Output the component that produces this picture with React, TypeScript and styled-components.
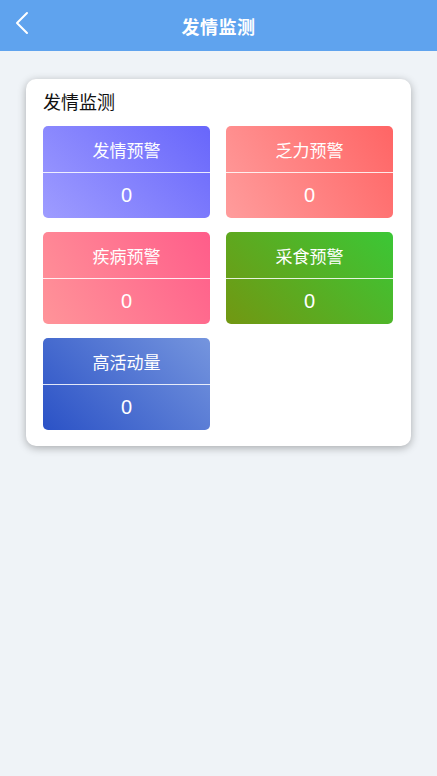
import React from "react";
import styled, { createGlobalStyle } from "styled-components";

const Global = createGlobalStyle`
  html, body {
    margin: 0;
    padding: 0;
    background: #eff3f7;
    font-family: "Liberation Sans", "Noto Sans CJK SC", sans-serif;
  }
`;

const Page = styled.div`
  min-height: 776px;
  background: #eff3f7;
`;

const Header = styled.div`
  height: 51px;
  background: #5fa3ee;
  display: flex;
  align-items: center;
  justify-content: center;
  position: relative;
  color: #fff;
`;

const Back = styled.div`
  position: absolute;
  left: 12px;
  top: 10px;
  width: 20px;
  height: 26px;
  display: flex;
  align-items: center;
  justify-content: center;
`;

const HeaderTitle = styled.div`
  font-size: 18px;
  font-weight: bold;
  letter-spacing: 0.5px;
`;

const Body = styled.div`
  padding: 28px 26px 0 26px;
`;

const Card = styled.div`
  background: #fff;
  border-radius: 10px;
  box-shadow: 0 2px 8px rgba(0, 0, 0, 0.3);
  padding: 12px 17px 16px 17px;
`;

const CardTitle = styled.div`
  font-size: 18px;
  color: #111;
  line-height: 24px;
  margin-bottom: 11px;
`;

const Grid = styled.div`
  display: grid;
  grid-template-columns: 167px 167px;
  column-gap: 16px;
  row-gap: 14px;
`;

const Tile = styled.div<{ $bg: string }>`
  height: 92px;
  border-radius: 5px;
  background: ${(p) => p.$bg};
  color: #fff;
  display: flex;
  flex-direction: column;
  overflow: hidden;
`;

const TileLabel = styled.div`
  height: 46px;
  display: flex;
  align-items: center;
  justify-content: center;
  font-size: 17px;
  border-bottom: 1px solid rgba(255, 255, 255, 0.85);
`;

const TileValue = styled.div`
  flex: 1;
  display: flex;
  align-items: center;
  justify-content: center;
  font-size: 20px;
`;

const tiles = [
  { label: "发情预警", value: 0, bg: "linear-gradient(45deg, #9e9cff, #6866fb)" },
  { label: "乏力预警", value: 0, bg: "linear-gradient(60deg, #ff9c9c, #ff6565)" },
  { label: "疾病预警", value: 0, bg: "linear-gradient(60deg, #ff9499, #ff5d8a)" },
  { label: "采食预警", value: 0, bg: "linear-gradient(45deg, #729712, #3bc736)" },
  { label: "高活动量", value: 0, bg: "linear-gradient(45deg, #2b52c6, #7595de)" },
];

export default function App() {
  return (
    <Page>
      <Global />
      <Header>
        <Back>
          <svg width="14" height="24" viewBox="0 0 14 24">
            <path d="M12 2 L2 12 L12 22" fill="none" stroke="#fff" strokeWidth="2" strokeLinecap="round" strokeLinejoin="round" />
          </svg>
        </Back>
        <HeaderTitle>发情监测</HeaderTitle>
      </Header>
      <Body>
        <Card>
          <CardTitle>发情监测</CardTitle>
          <Grid>
            {tiles.map((t) => (
              <Tile key={t.label} $bg={t.bg}>
                <TileLabel>{t.label}</TileLabel>
                <TileValue>{t.value}</TileValue>
              </Tile>
            ))}
          </Grid>
        </Card>
      </Body>
    </Page>
  );
}
